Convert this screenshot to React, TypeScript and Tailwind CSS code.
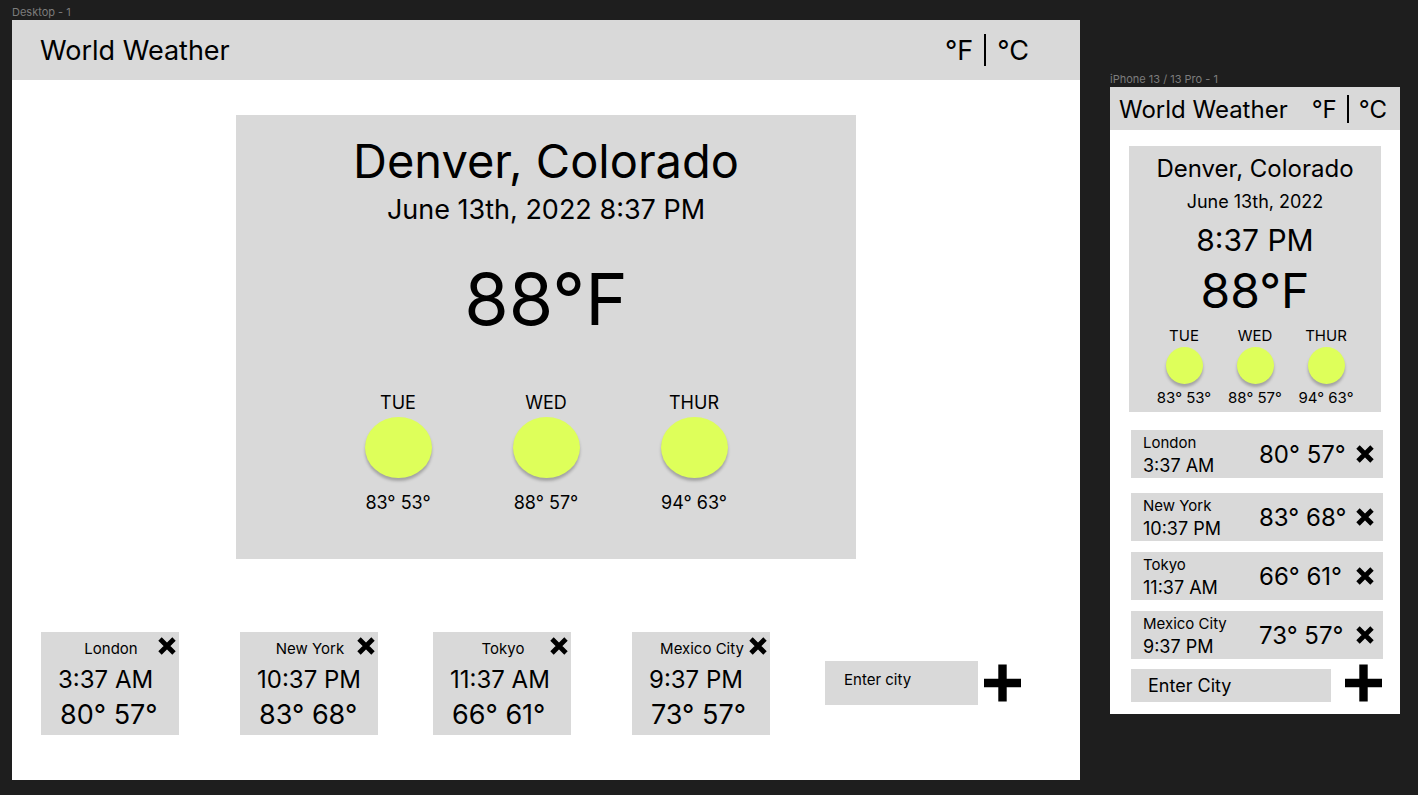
import React from "react";

type City = { name: string; time: string; temps: string };
type Day = { label: string; temps: string };

const cities: City[] = [
  { name: "London", time: "3:37 AM", temps: "80° 57°" },
  { name: "New York", time: "10:37 PM", temps: "83° 68°" },
  { name: "Tokyo", time: "11:37 AM", temps: "66° 61°" },
  { name: "Mexico City", time: "9:37 PM", temps: "73° 57°" },
];

const days: Day[] = [
  { label: "TUE", temps: "83° 53°" },
  { label: "WED", temps: "88° 57°" },
  { label: "THUR", temps: "94° 63°" },
];

function CrossIcon() {
  return (
    <svg viewBox="0 0 18 18" className="block size-[18px]" aria-hidden="true">
      <path d="M2 2 L16 16 M16 2 L2 16" stroke="#000" strokeWidth="4.8" fill="none" />
    </svg>
  );
}

function PlusIcon() {
  return (
    <svg viewBox="0 0 38 38" className="block size-[38px]" aria-hidden="true">
      <path d="M18.5 0.5 V37.5 M0 19 H37" stroke="#000" strokeWidth="8.4" fill="none" />
    </svg>
  );
}

function CityCard({ city }: { city: City }) {
  return (
    <li className="relative w-[138px] bg-[#d9d9d9] pt-[7px] pb-1 whitespace-nowrap">
      <h3 className="pl-0.5 text-center text-[15px] leading-5">{city.name}</h3>
      <p className="mt-[7px] pl-[17px] text-[24px] leading-7">{city.time}</p>
      <p className="mt-[5px] pl-[19px] text-[27px] leading-8">{city.temps}</p>
      <button type="button" aria-label={`Remove ${city.name}`} className="absolute top-[5px] right-[3px]">
        <CrossIcon />
      </button>
    </li>
  );
}

function CityRow({ city }: { city: City }) {
  return (
    <li className="flex items-center gap-2 bg-[#d9d9d9] pr-[9px] pl-3 whitespace-nowrap first:mb-1">
      <div className="flex-1 pt-[3px]">
        <h3 className="text-[15px] leading-5">{city.name}</h3>
        <p className="mt-px text-[18px] leading-6">{city.time}</p>
      </div>
      <p className="w-[89px] pt-0.5 text-[24px] leading-8">{city.temps}</p>
      <button type="button" aria-label={`Remove ${city.name}`}>
        <CrossIcon />
      </button>
    </li>
  );
}

function DesktopFrame() {
  return (
    <section className="min-w-0 flex-1">
      <h2 className="text-[11px] leading-4 text-[#7c7c7c]">Desktop - 1</h2>
      <div className="bg-white pb-[45px]">
        <header className="flex h-[60px] items-center justify-between bg-[#d9d9d9] pr-[51px] pl-7 text-[27px] leading-8">
          <h1 className="pt-0.5">World Weather</h1>
          <div className="flex items-center gap-[11px]">
            <button type="button" className="pt-0.5">°F</button>
            <span className="h-8 w-0.5 bg-black" />
            <button type="button" className="pt-0.5">°C</button>
          </div>
        </header>

        <article className="mx-auto mt-[35px] max-w-[620px] bg-[#d9d9d9] pt-[17px] pb-[45px] text-center">
          <h2 className="text-[47px] leading-[58px]">Denver, Colorado</h2>
          <p className="mt-[3px] text-[27px] leading-[34px]">June 13th, 2022 8:37 PM</p>
          <p className="mt-7 text-[72px] leading-[88px]">88°F</p>
          <ul className="mt-[49px] flex justify-center gap-[81px] text-[18px] leading-[22px] whitespace-nowrap">
            {days.map((day) => (
              <li key={day.label} className="flex w-[67px] flex-col items-center">
                <span>{day.label}</span>
                <span className="mt-[3px] h-[61px] w-[67px] rounded-[50%] bg-[#deff5a] shadow-[0_3px_3px_rgba(0,0,0,0.25)]" />
                <span className="mt-3.5">{day.temps}</span>
              </li>
            ))}
          </ul>
        </article>

        <div className="mt-[73px] flex items-center justify-between pr-[58px] pl-[29px]">
          <ul className="flex gap-[61px]">
            {cities.slice(0, 2).map((city) => (
              <CityCard key={city.name} city={city} />
            ))}
          </ul>
          <ul className="flex gap-[61px]">
            {cities.slice(2).map((city) => (
              <CityCard key={city.name} city={city} />
            ))}
          </ul>
          <form className="mb-0.5 flex items-center gap-[6px]" onSubmit={(e) => e.preventDefault()}>
            <input
              type="text"
              aria-label="Enter city"
              placeholder="Enter city"
              className="h-11 w-[153px] bg-[#d9d9d9] pb-1.5 pl-[19px] text-[15px] leading-5 outline-none placeholder:text-black placeholder:opacity-100"
            />
            <button type="submit" aria-label="Add city">
              <PlusIcon />
            </button>
          </form>
        </div>
      </div>
    </section>
  );
}

function PhoneFrame() {
  return (
    <section className="w-[290px] shrink-0 pt-[67px]">
      <h2 className="text-[11px] leading-4 text-[#7c7c7c]">iPhone 13 / 13 Pro - 1</h2>
      <div className="bg-white pb-3">
        <header className="flex h-[43px] items-center justify-between bg-[#d9d9d9] pr-[13px] pl-[9px] text-[24px] leading-8 whitespace-nowrap">
          <h1 className="pt-0.5">World Weather</h1>
          <div className="flex items-center gap-2.5">
            <button type="button" className="pt-0.5">°F</button>
            <span className="h-7 w-0.5 bg-black" />
            <button type="button" className="pt-0.5">°C</button>
          </div>
        </header>

        <article className="mx-[19px] mt-4 bg-[#d9d9d9] pt-2 pb-[5px] text-center">
          <h2 className="text-[24px] leading-[30px]">Denver, Colorado</h2>
          <p className="mt-[7px] text-[18px] leading-[22px]">June 13th, 2022</p>
          <p className="mt-[9px] text-[30px] leading-9">8:37 PM</p>
          <p className="mt-1 text-[48px] leading-[58px]">88°F</p>
          <ul className="mt-[7px] flex justify-center gap-[17px] text-[15px] leading-[18px] whitespace-nowrap">
            {days.map((day) => (
              <li key={day.label} className="flex w-[54px] flex-col items-center">
                <span>{day.label}</span>
                <span className="mt-0.5 size-[37px] rounded-full bg-[#deff5a] shadow-[0_3px_3px_rgba(0,0,0,0.25)]" />
                <span className="mt-[5px]">{day.temps}</span>
              </li>
            ))}
          </ul>
        </article>

        <div className="mt-[18px] pr-[17px] pl-[21px]">
          <ul className="flex flex-col gap-[11px]">
            {cities.map((city) => (
              <CityRow key={city.name} city={city} />
            ))}
          </ul>
          <form className="mt-[5px] flex items-end justify-between" onSubmit={(e) => e.preventDefault()}>
            <input
              type="text"
              aria-label="Enter City"
              placeholder="Enter City"
              className="h-[33px] w-[200px] bg-[#d9d9d9] pl-[17px] text-[18px] leading-6 outline-none placeholder:text-black placeholder:opacity-100"
            />
            <button type="submit" aria-label="Add city">
              <PlusIcon />
            </button>
          </form>
        </div>
      </div>
    </section>
  );
}

export default function App() {
  return (
    <main className="flex min-h-screen items-start gap-[30px] bg-[#1e1e1e] pt-1 pr-[18px] pl-3 font-['Inter',sans-serif] text-black">
      <DesktopFrame />
      <PhoneFrame />
    </main>
  );
}
